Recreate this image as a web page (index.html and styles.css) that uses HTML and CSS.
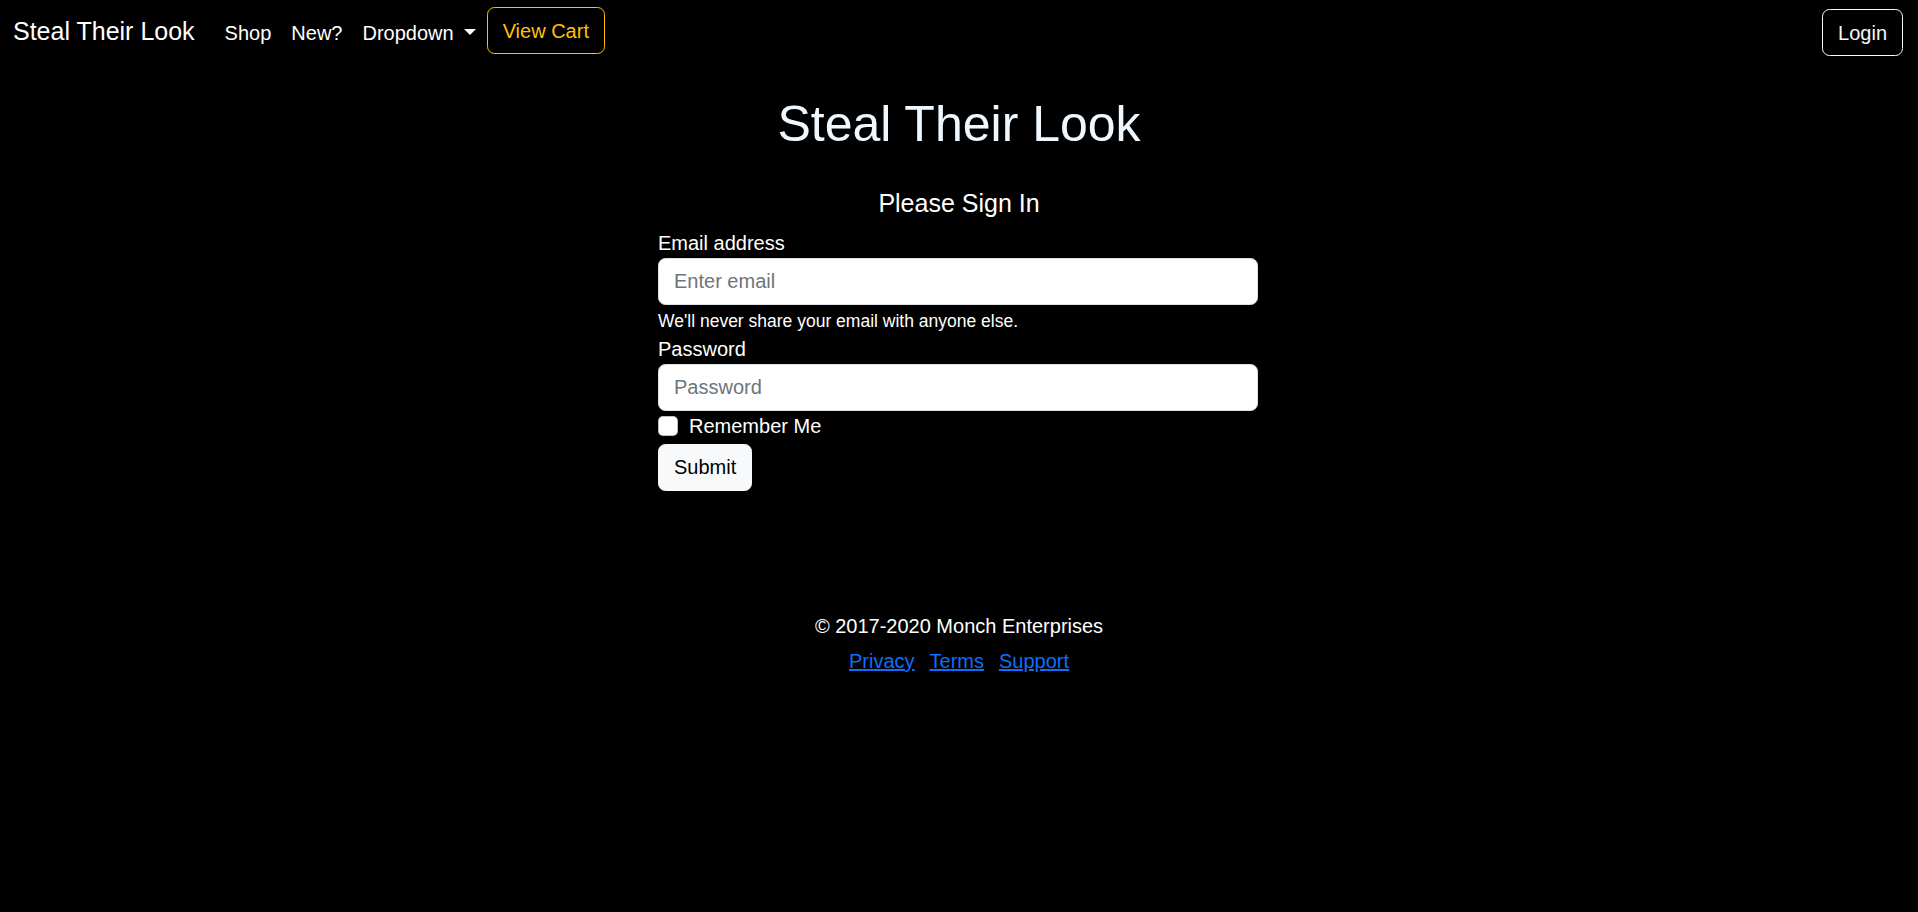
FILE: index.html
```html
<!DOCTYPE html>
<html lang="en">
<head>
<meta charset="utf-8">
<title>Steal Their Look</title>
<link rel="stylesheet" href="styles.css">
</head>
<body>
<nav class="navbar">
  <div class="nav-left">
    <a class="brand" href="#">Steal Their Look</a>
    <ul class="nav-links">
      <li><a class="nav-link" href="#">Shop</a></li>
      <li><a class="nav-link" href="#">New?</a></li>
      <li><a class="nav-link dropdown" href="#">Dropdown<span class="caret"></span></a></li>
    </ul>
    <a class="btn btn-warning-outline" href="#">View Cart</a>
  </div>
  <div class="nav-right">
    <a class="btn btn-light-outline" href="#">Login</a>
  </div>
</nav>

<main class="main">
  <h1 class="title">Steal Their Look</h1>
  <h5 class="subtitle">Please Sign In</h5>
  <form class="signin">
    <label class="form-label" for="email">Email address</label>
    <input class="form-control" id="email" type="email" placeholder="Enter email">
    <div class="form-text">We'll never share your email with anyone else.</div>
    <label class="form-label" for="pw">Password</label>
    <input class="form-control" id="pw" type="password" placeholder="Password">
    <div class="form-check">
      <input class="check-input" type="checkbox" id="remember">
      <label class="check-label" for="remember">Remember Me</label>
    </div>
    <button class="btn btn-light" type="button">Submit</button>
  </form>
</main>

<footer class="footer">
  <p class="copyright">© 2017-2020 Monch Enterprises</p>
  <div class="footer-links">
    <a href="#">Privacy</a>
    <a href="#">Terms</a>
    <a href="#">Support</a>
  </div>
</footer>
</body>
</html>
```

FILE: styles.css
```css
* { box-sizing: border-box; }

html, body {
  margin: 0;
  padding: 0;
  background: #000;
}

body {
  font-family: "Liberation Sans", Arial, sans-serif;
  font-size: 20px;
  line-height: 1.5;
  color: #fff;
  min-height: 912px;
}

a { text-decoration: none; }

.navbar {
  display: flex;
  justify-content: space-between;
  align-items: flex-start;
  padding: 7px 15px 0 13px;
}

.nav-left {
  display: flex;
  align-items: center;
  height: 47px;
}

.brand {
  font-size: 25px;
  line-height: 37.5px;
  color: #fff;
  margin: 2px 20px 0 0;
  white-space: nowrap;
}

.nav-links {
  display: flex;
  list-style: none;
  margin: 4px 0 0 0;
  padding: 0;
}

.nav-link {
  display: flex;
  align-items: center;
  padding: 0 10px;
  line-height: 30px;
  color: #fff;
}

.caret {
  display: inline-block;
  width: 0;
  height: 0;
  margin-left: 10px;
  margin-top: -2px;
  border-top: 6px solid #fff;
  border-left: 6px solid transparent;
  border-right: 6px solid transparent;
}

.btn {
  display: inline-block;
  font-family: inherit;
  font-size: 20px;
  line-height: 30px;
  padding: 7.5px 15px;
  border: 1px solid transparent;
  border-radius: 7.5px;
  white-space: nowrap;
  cursor: pointer;
}

.btn-warning-outline {
  color: #ffc107;
  border-color: #ffc107;
  margin-left: 1px;
}

.btn-light-outline {
  color: #f8f9fa;
  border-color: #f8f9fa;
  margin-top: 2px;
}

.btn-light {
  color: #000;
  background: #f8f9fa;
  border-color: #f8f9fa;
  height: 47px;
}

.main {
  display: flex;
  flex-direction: column;
  align-items: center;
}

.title {
  margin: 38px 0 0;
  font-size: 50px;
  line-height: 60px;
  font-weight: 400;
  color: #f0f8ff;
}

.subtitle {
  margin: 34px 0 10px;
  font-size: 25px;
  line-height: 30px;
  font-weight: 400;
}

.signin {
  width: 600px;
  margin-left: -2px;
  display: flex;
  flex-direction: column;
  align-items: flex-start;
}

.form-label {
  display: block;
  line-height: 30px;
  margin-bottom: 0;
}

.form-control {
  display: block;
  width: 100%;
  height: 47px;
  padding: 7.5px 15px;
  font-family: inherit;
  font-size: 20px;
  line-height: 30px;
  color: #212529;
  background: #fff;
  border: 1px solid #dee2e6;
  border-radius: 7.5px;
  outline: none;
}

.form-control::placeholder {
  color: #6c757d;
  opacity: 1;
}

.form-text {
  margin-top: 3px;
  font-size: 17.5px;
  line-height: 26.25px;
}

.form-check {
  display: flex;
  align-items: flex-start;
  min-height: 30px;
  margin-bottom: 2.5px;
}

.check-input {
  appearance: none;
  -webkit-appearance: none;
  width: 20px;
  height: 20px;
  margin: 5px 11px 0 0;
  background: #fff;
  border: 1px solid rgba(0, 0, 0, 0.25);
  border-radius: 5px;
  flex-shrink: 0;
}

.check-label {
  line-height: 30px;
}

.footer {
  margin-top: 120px;
  text-align: center;
}

.copyright {
  margin: 0;
  line-height: 30px;
}

.footer-links {
  display: flex;
  justify-content: center;
  gap: 15px;
  margin-top: 5px;
  line-height: 30px;
}

.footer-links a {
  color: #0d6efd;
  text-decoration: underline;
}
```
